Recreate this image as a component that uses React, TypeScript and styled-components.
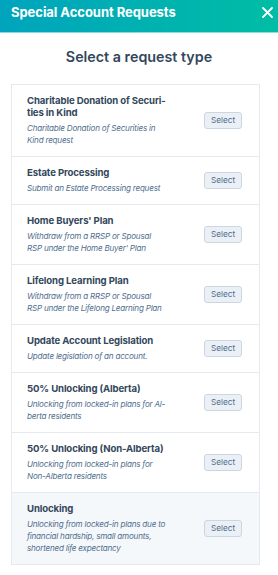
import React from "react";
import styled, { createGlobalStyle } from "styled-components";

const GlobalStyle = createGlobalStyle`
  html, body { margin: 0; padding: 0; background: #ffffff; }
  body { font-family: Inter, "Noto Sans", sans-serif; -webkit-font-smoothing: antialiased; }
  * { box-sizing: border-box; }
`;

const Page = styled.div`
  width: 278px;
  min-height: 575px;
  background: #ffffff;
  display: flex;
  flex-direction: column;
`;

const Header = styled.header`
  height: 32px;
  display: flex;
  align-items: flex-start;
  justify-content: space-between;
  padding: 4px 4px 0 11px;
  background: linear-gradient(90deg, #00a4bd 0%, #00bda5 100%);
`;

const HeaderRule = styled.div`
  height: 1px;
  background: linear-gradient(90deg, #00a4bd 0%, #00bda5 100%);
  opacity: 0.45;
`;

const HeaderTitle = styled.h1`
  margin: 0;
  font-size: 13px;
  line-height: 17px;
  font-weight: 700;
  color: #ffffff;
  letter-spacing: -0.05px;
`;

const CloseButton = styled.button`
  width: 14px;
  height: 14px;
  margin-top: 1px;
  padding: 0;
  border: 0;
  background: transparent;
  display: flex;
  align-items: center;
  justify-content: center;
  cursor: pointer;
`;

const Heading = styled.h2`
  margin: 14px 0 17px;
  text-align: center;
  font-size: 14.3px;
  line-height: 20px;
  font-weight: 600;
  color: #33475b;
`;

const Card = styled.div`
  margin: 0 18px 8px 11px;
  border: 1px solid #e5e9f0;
  display: flex;
  flex-direction: column;
`;

const Row = styled.div<{ $muted?: boolean; $last?: boolean }>`
  display: flex;
  align-items: center;
  justify-content: space-between;
  padding: 10px 17px 10px 15px;
  border-bottom: ${(p) => (p.$last ? "0" : "1px solid #e5e9f0")};
  background: ${(p) => (p.$muted ? "#f5f8fa" : "#ffffff")};
  min-height: ${(p) => (p.$last ? "71px" : "auto")};
`;

const TextBlock = styled.div`
  display: flex;
  flex-direction: column;
  gap: 3px;
`;

const Title = styled.div`
  font-size: 9.6px;
  line-height: 12px;
  font-weight: 700;
  color: #33475b;
  letter-spacing: -0.12px;
  white-space: nowrap;
`;

const Desc = styled.div`
  font-size: 8.1px;
  line-height: 12px;
  font-style: italic;
  color: #516f90;
  letter-spacing: -0.22px;
  white-space: nowrap;
`;

const SelectButton = styled.button`
  flex: none;
  width: 38px;
  height: 17px;
  padding: 0;
  border: 1px solid #cbd6e2;
  border-radius: 3px;
  background: #eaf0f6;
  color: #4f6b8c;
  font-family: Inter, "Noto Sans", sans-serif;
  font-size: 8.2px;
  line-height: 15px;
  cursor: pointer;
`;

type Item = { title: string[]; desc: string[] };

const items: Item[] = [
  {
    title: ["Charitable Donation of Securi-", "ties in Kind"],
    desc: ["Charitable Donation of Securities in", "Kind request"],
  },
  { title: ["Estate Processing"], desc: ["Submit an Estate Processing request"] },
  {
    title: ["Home Buyers' Plan"],
    desc: ["Withdraw from a RRSP or Spousal", "RSP under the Home Buyer' Plan"],
  },
  {
    title: ["Lifelong Learning Plan"],
    desc: ["Withdraw from a RRSP or Spousal", "RSP under the Lifelong Learning Plan"],
  },
  { title: ["Update Account Legislation"], desc: ["Update legislation of an account."] },
  {
    title: ["50% Unlocking (Alberta)"],
    desc: ["Unlocking from locked-in plans for Al-", "berta residents"],
  },
  {
    title: ["50% Unlocking (Non-Alberta)"],
    desc: ["Unlocking from locked-in plans for", "Non-Alberta residents"],
  },
  {
    title: ["Unlocking"],
    desc: [
      "Unlocking from locked-in plans due to",
      "financial hardship, small amounts,",
      "shortened life expectancy",
    ],
  },
];

const Lines = ({ lines }: { lines: string[] }) => (
  <>
    {lines.map((l, i) => (
      <React.Fragment key={i}>
        {i > 0 && <br />}
        {l}
      </React.Fragment>
    ))}
  </>
);

export default function App() {
  return (
    <Page>
      <GlobalStyle />
      <Header>
        <HeaderTitle>Special Account Requests</HeaderTitle>
        <CloseButton aria-label="Close">
          <svg width="11" height="11" viewBox="0 0 11 11">
            <path d="M1 1 L10 10 M10 1 L1 10" stroke="#ffffff" strokeWidth="1.8" strokeLinecap="round" />
          </svg>
        </CloseButton>
      </Header>
      <HeaderRule />
      <Heading>Select a request type</Heading>
      <Card>
        {items.map((it, i) => (
          <Row key={i} $muted={i === items.length - 1} $last={i === items.length - 1}>
            <TextBlock>
              <Title>
                <Lines lines={it.title} />
              </Title>
              <Desc>
                <Lines lines={it.desc} />
              </Desc>
            </TextBlock>
            <SelectButton>Select</SelectButton>
          </Row>
        ))}
      </Card>
    </Page>
  );
}
